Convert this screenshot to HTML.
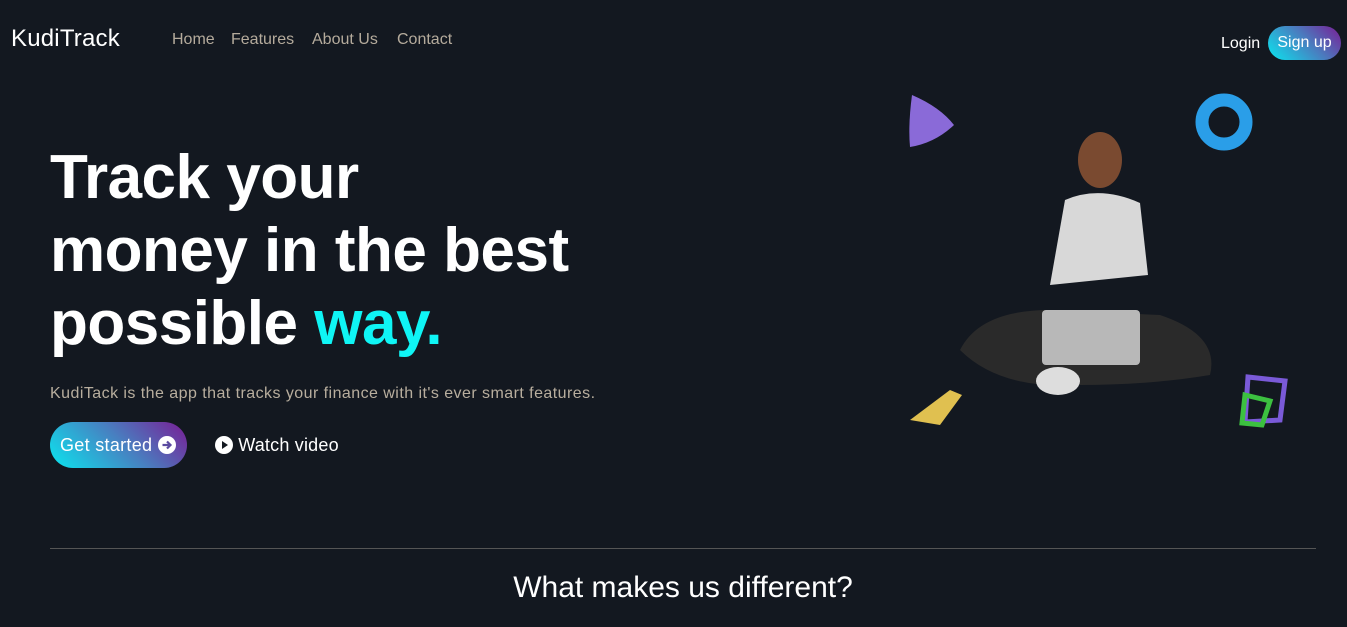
<!DOCTYPE html>
<html><head><meta charset="utf-8"><style>
*{margin:0;padding:0;box-sizing:border-box}
body{width:1347px;height:627px;background:#131820;font-family:"Liberation Sans",sans-serif;color:#fff;position:relative;overflow:hidden}
.abs{position:absolute}
.logo{left:11px;top:25px;font-size:24px;letter-spacing:0.2px}
.nav{top:31px;font-size:16px;color:#b5ab9c}
h1{position:absolute;left:50px;top:141px;font-size:62px;line-height:73px;font-weight:700;letter-spacing:-0.5px}
.way{color:#0ff5f5}
.p{left:50px;top:385px;font-size:16px;color:#b8ae9e;letter-spacing:0.45px}
.grad{background:linear-gradient(45deg,#0ae6ef 0%,#4a7cbf 55%,#7a1d95 100%);border-radius:30px}
.gs{left:50px;top:422px;width:137px;height:46px;font-size:18px;line-height:46px;padding-left:10px;letter-spacing:0.3px}
.su{left:1268px;top:26px;width:73px;height:34px;font-size:16px;line-height:34px;text-align:center}
</style></head><body>
<div class="abs logo">KudiTrack</div>
<div class="abs nav" style="left:172px">Home</div>
<div class="abs nav" style="left:231px">Features</div>
<div class="abs nav" style="left:312px">About Us</div>
<div class="abs nav" style="left:397px">Contact</div>
<div class="abs" style="left:1221px;top:35px;font-size:16px">Login</div>
<div class="abs grad su">Sign up</div>
<h1>Track your<br>money in the best<br>possible <span class="way">way.</span></h1>
<div class="abs p">KudiTack is the app that tracks your finance with it's ever smart features.</div>
<div class="abs grad gs">Get started <svg width="18" height="18" viewBox="0 0 18 18" style="vertical-align:-3px"><circle cx="9" cy="9" r="9" fill="#fff"/><path d="M4.5 9h7M9 5.5l3.5 3.5L9 12.5" stroke="#5a4aa0" stroke-width="2.2" fill="none"/></svg></div>
<div class="abs" style="left:215px;top:435px;font-size:18px;letter-spacing:0.2px"><svg width="18" height="18" viewBox="0 0 18 18" style="vertical-align:-3px"><circle cx="9" cy="9" r="9" fill="#fff"/><path d="M7 5l6 4-6 4z" fill="#131820"/></svg> Watch video</div>
<svg class="abs" style="left:900px;top:85px" width="400" height="350">
<path d="M12 10 Q8 40 10 62 Q35 58 54 40 Q40 22 12 10z" fill="#8a6ad8"/>
<circle cx="324" cy="37" r="22" fill="none" stroke="#2a9ee8" stroke-width="13"/>
<path d="M10 335 L50 305 L62 310 L40 340 Z" fill="#e0c050"/>
<path d="M348 292 L385 296 L380 335 L345 337 Z" fill="none" stroke="#7a5ad8" stroke-width="5"/>
<path d="M345 310 L370 316 L362 340 L342 338Z" fill="none" stroke="#3cc040" stroke-width="5"/>
<ellipse cx="200" cy="75" rx="22" ry="28" fill="#7a4a30"/>
<path d="M165 115 Q200 100 240 118 L248 190 L150 200 Z" fill="#d8d8d8"/>
<path d="M60 265 Q80 225 150 225 L260 230 Q320 250 310 290 Q250 300 180 300 Q100 305 60 265z" fill="#2a2a2a"/>
<rect x="142" y="225" width="98" height="55" rx="4" fill="#b8b8b8"/>
<ellipse cx="158" cy="296" rx="22" ry="14" fill="#ddd"/>
</svg>
<div class="abs" style="left:50px;top:548px;width:1266px;height:1px;background:#555"></div>
<div class="abs" style="left:0;width:1366px;top:571px;text-align:center;font-size:30px">What makes us different?</div>
</body></html>
